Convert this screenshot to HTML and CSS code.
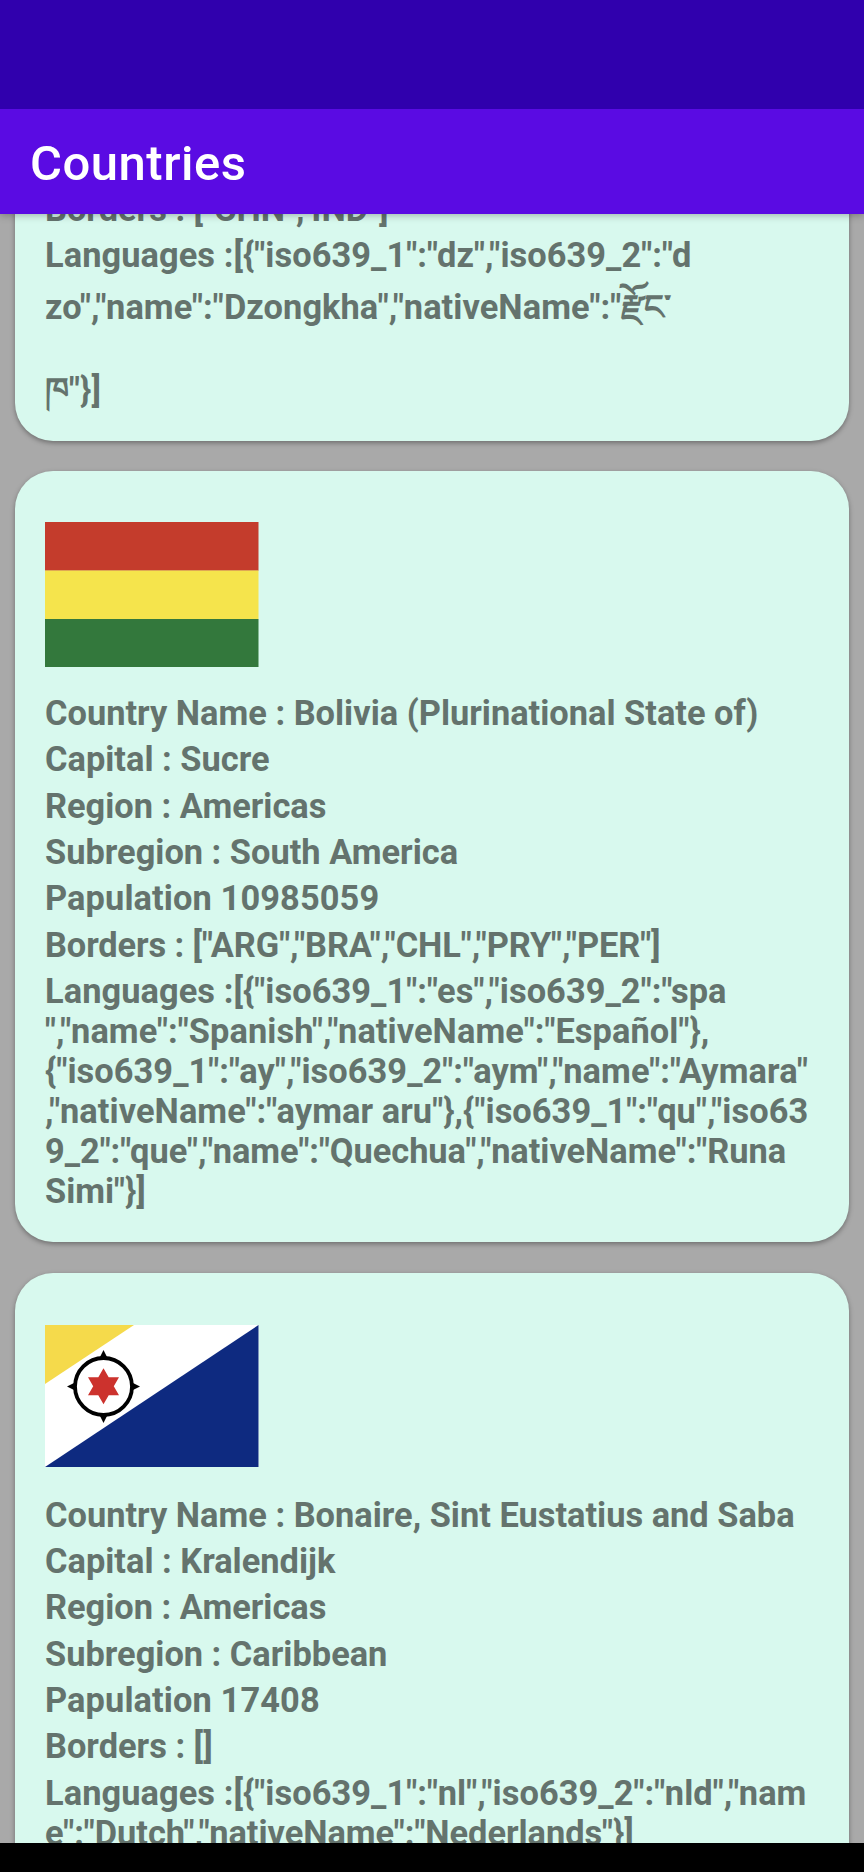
FILE: index.html
```
<!DOCTYPE html>
<html lang="en"><head><meta charset="utf-8"><title>Countries</title><link rel="stylesheet" href="styles.css"></head>
<body>
<div class="screen">
<div class="status"></div>
<header class="appbar"><h1>Countries</h1></header>
<main class="list">
<section class="card card-first">
<p class="row">Borders : ["CHN","IND"]</p>
<p class="langs"><span class="line">Languages :[{"iso639_1":"dz","iso639_2":"d</span><span class="line tib1">zo","name":"Dzongkha","nativeName":"རྫོང་</span><span class="line tib2">ཁ"}]</span></p>
</section>
<section class="card">
<svg class="flag bolivia" viewBox="0 0 213 146" preserveAspectRatio="none"><path fill="#c43c2c" d="M0 0h213v49H0z"/><path fill="#f5e44c" d="M0 48.7h213v49H0z"/><path fill="#33783c" d="M0 97.3h213V146H0z"/></svg>
<p class="row">Country Name : Bolivia (Plurinational State of)</p>
<p class="row">Capital : Sucre</p>
<p class="row">Region : Americas</p>
<p class="row">Subregion : South America</p>
<p class="row population">Papulation 10985059</p>
<p class="row borders">Borders : ["ARG","BRA","CHL","PRY","PER"]</p>
<p class="langs"><span class="line">Languages :[{"iso639_1":"es","iso639_2":"spa</span><span class="line">","name":"Spanish","nativeName":"Español"},</span><span class="line">{"iso639_1":"ay","iso639_2":"aym","name":"Aymara"</span><span class="line">,"nativeName":"aymar aru"},{"iso639_1":"qu","iso63</span><span class="line tight">9_2":"que","name":"Quechua","nativeName":"Runa</span><span class="line tight">Simi"}]</span></p>
</section>
<section class="card card-last">
<svg class="flag bonaire" viewBox="0 0 213.5 142" preserveAspectRatio="none"><path fill="#fff" d="M0 0h213.500v142H0z"/><path fill="#f5da4b" d="M0 0h89L0 59z"/><path fill="#0e2a80" d="M213.500 0v142H0z"/><path d="M58.500 25l4 8h-8zM58.500 98l4-8h-8zM22 61.500l8-4v8zM95 61.500l-8-4v8z"/><circle cx="58.500" cy="61.500" r="28.500" fill="#fff" stroke="#000" stroke-width="3.800"/><path fill="#cc322d" d="M58.500 43.300l5.200 9H74l-5.200 9 5.200 9H63.700l-5.200 9-5.200-9H43l5.200-9-5.200-9h10.300z"/></svg>
<p class="row">Country Name : Bonaire, Sint Eustatius and Saba</p>
<p class="row">Capital : Kralendijk</p>
<p class="row">Region : Americas</p>
<p class="row">Subregion : Caribbean</p>
<p class="row population">Papulation 17408</p>
<p class="row">Borders : []</p>
<p class="langs"><span class="line">Languages :[{"iso639_1":"nl","iso639_2":"nld","nam</span><span class="line tight">e":"Dutch","nativeName":"Nederlands"}]</span></p>
</section>
</main>
<div class="nav"></div>
</div>
</body></html>
```
FILE: styles.css
```
* { box-sizing: border-box; }
body { margin: 0; }
h1, p { margin: 0; }
.screen { width: 864px; height: 1872px; display: flex; flex-direction: column; overflow: hidden; background: #a9a9a9; font-family: Roboto, "Noto Sans", sans-serif; }
.status { height: 109px; flex: none; background: #3000ad; z-index: 2; }
.appbar { height: 104.5px; flex: none; display: flex; align-items: center; padding: 5px 30px 0; background: #5a0be3; color: #fff; box-shadow: 0 1px 8px rgba(0,0,0,.3); z-index: 1; }
.appbar h1 { font-size: 49px; font-weight: 500; line-height: 56px; letter-spacing: .5px; }
.list { flex: 1; min-height: 0; overflow: hidden; padding: 0 15px; display: flex; flex-direction: column; gap: 30.5px; }
.card { flex: none; height: 771px; padding: 50.5px 30px 0; border-radius: 38px; background: #d8f9ee; box-shadow: 0 2px 5px rgba(0,0,0,.35); color: #64736d; font-size: 34.4px; font-weight: 700; }
.card-first { height: 256px; margin-top: -29px; padding-top: 1px; border-radius: 0 0 38px 38px; }
.row { height: 46.35px; line-height: 40px; padding-top: 3px; white-space: pre; }
.borders { letter-spacing: -.1px; }
.population { letter-spacing: .1px; }
.langs { padding-top: 3px; letter-spacing: .06px; }
.line { display: block; height: 40px; line-height: 40px; white-space: pre; }
.tight { letter-spacing: -.04px; }
.flag { display: block; width: 213.5px; }
.bolivia { height: 145.5px; margin-bottom: 23px; }
.bonaire { height: 142px; margin: 1.8px 0 24.8px; }
.langs .tib1 { height: 65px; line-height: 65px; }
.langs .tib2 { height: 100px; line-height: 100px; }
.nav { height: 29.5px; flex: none; background: #000; z-index: 1; }
```
